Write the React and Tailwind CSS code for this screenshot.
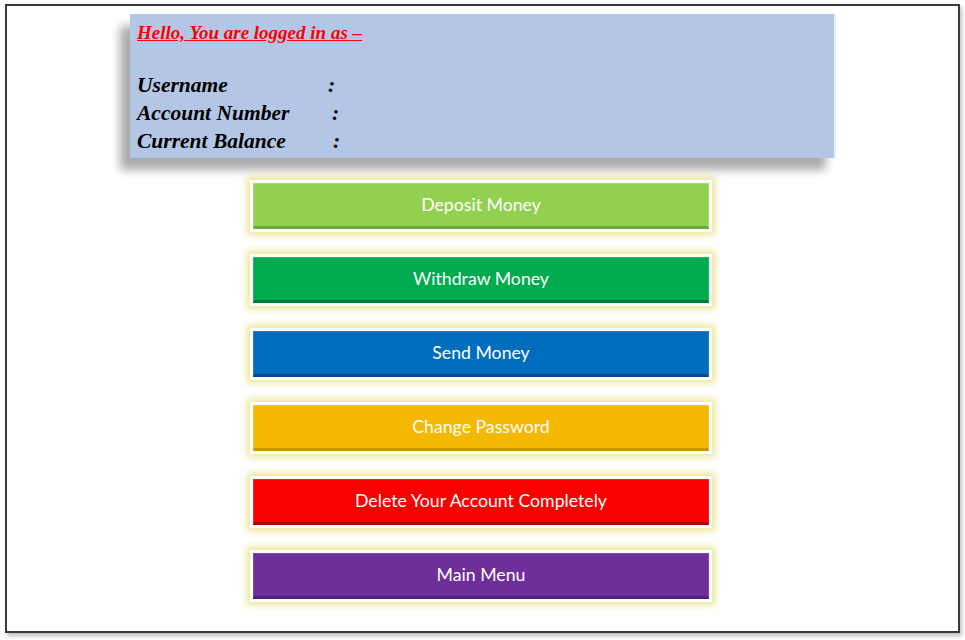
import React from "react";

const buttons = [
  { label: "Deposit Money", cls: "bg-[#92d050] border-b-[#6fa83a] border-[#a6dc6c]" },
  { label: "Withdraw Money", cls: "bg-[#00aa4f] border-b-[#007a38] border-[#1fbb63]" },
  { label: "Send Money", cls: "bg-[#006ebd] border-b-[#004f8a] border-[#1a80c8]" },
  { label: "Change Password", cls: "bg-[#f5b800] border-b-[#c99500] border-[#f8c420]" },
  { label: "Delete Your Account Completely", cls: "bg-[#f80000] border-b-[#b80000] border-[#ff2020]" },
  { label: "Main Menu", cls: "bg-[#6e2f9b] border-b-[#522275] border-[#8145ac]" },
];

const MenuButton = ({ label, cls }) => {
  return (
    <div className="h-[52px] bg-white p-[3px] shadow-[0_0_7px_3px_rgba(230,222,120,0.8)]">
      <div
        className={`h-full flex items-center justify-center border border-b-[3px] text-white text-[17.7px] font-['Lato',sans-serif] ${cls}`}
      >
        {label}
      </div>
    </div>
  );
};

const App = () => {
  return (
    <div className="w-[965px] h-[640px] bg-white pt-[4px] pl-[5px]">
      <div className="w-[955px] h-[629px] border-2 border-[#3a3a3a] bg-white shadow-[2px_3px_4px_rgba(0,0,0,0.25)] flex flex-col">
        <div className="ml-[123px] mt-[8px] w-[706px] h-[144px] bg-[#b3c6e6] border-r-2 border-r-[#e6eeff] shadow-[-10px_12px_9px_rgba(0,0,0,0.33)] pl-[7px] pt-[6px] font-['Liberation_Serif',serif] italic font-bold">
          <div className="text-[#ff0000] text-[19px] underline leading-[26px]">
            Hello, You are logged in as –
          </div>
          <div className="mt-[25px] text-black text-[21.5px] leading-[28px]">
            <div className="flex">
              <span className="w-[191px]">Username</span>
              <span>:</span>
            </div>
            <div className="flex">
              <span className="w-[195px]">Account Number</span>
              <span>:</span>
            </div>
            <div className="flex">
              <span className="w-[196px]">Current Balance</span>
              <span>:</span>
            </div>
          </div>
        </div>

        <div className="ml-[243px] mt-[22px] w-[462px] flex flex-col gap-[22px]">
          {buttons.map((b) => (
            <MenuButton key={b.label} label={b.label} cls={b.cls} />
          ))}
        </div>
      </div>
    </div>
  );
};

export default App;
